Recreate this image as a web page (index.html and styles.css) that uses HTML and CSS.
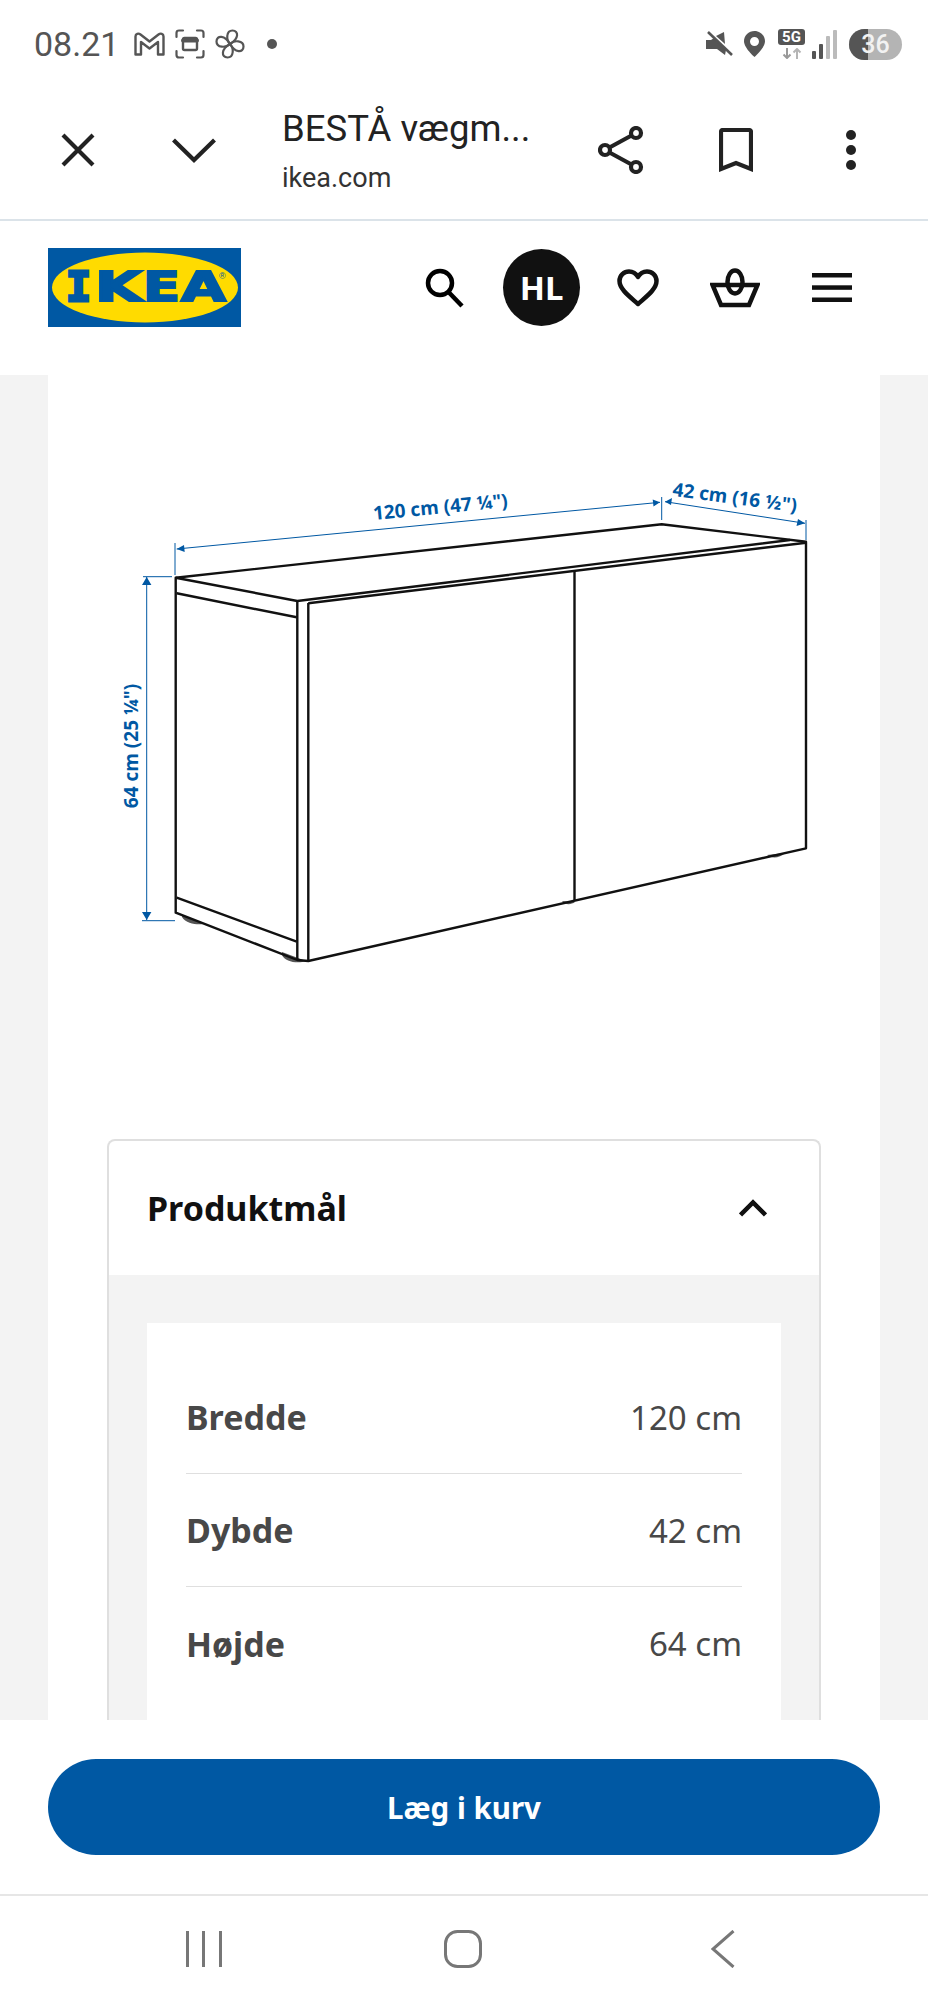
FILE: index.html
```html
<!DOCTYPE html>
<html lang="da">
<head>
    <meta charset="UTF-8">
    <meta name="viewport" content="width=device-width, initial-scale=1.0">
    <title>BESTÅ vægmonteret</title>
    <link rel="stylesheet" href="styles.css">
</head>
<body>
    <div class="status-bar">
        <span class="clock">08.21</span>
        <svg class="st-mail" width="31" height="24" viewBox="0 0 31 24" fill="none" stroke="#555" stroke-width="2.4" stroke-linejoin="round"><path d="M1.500 4.500c0-3 3-3.500 5-2l9 7 9-7c2-1.500 5-1 5 2v18h-5.500V10l-8.500 6.500L7 10v12.500H1.500z"/></svg>
        <svg class="st-shot" width="30" height="30" viewBox="0 0 30 30" fill="none" stroke="#555" stroke-width="2.2" stroke-linecap="round"><path d="M1.500 8V4q0-2.500 2.500-2.500h4M22 1.500h4q2.500 0 2.500 2.500v4M28.500 22v4q0 2.500-2.500 2.500h-4M8 28.500H4q-2.500 0-2.500-2.500v-4"/><rect x="8" y="9" width="14" height="12" rx="1.500" stroke-width="2.400"/><path d="M8 11.500h14" stroke-width="4"/></svg>
        <svg class="st-fan" width="30" height="30" viewBox="0 0 30 30" fill="none" stroke="#555" stroke-width="2.2" stroke-linejoin="round">
            <path d="M15 15C11 11 11 1.500 17.500 1.500 24 1.500 24 10 15 15z"/>
            <path transform="rotate(90 15 15)" d="M15 15C11 11 11 1.500 17.500 1.500 24 1.500 24 10 15 15z"/>
            <path transform="rotate(180 15 15)" d="M15 15C11 11 11 1.500 17.500 1.500 24 1.500 24 10 15 15z"/>
            <path transform="rotate(270 15 15)" d="M15 15C11 11 11 1.500 17.500 1.500 24 1.500 24 10 15 15z"/>
        </svg>
        <span class="st-dot"></span>
        <span class="status-spacer"></span>
        <svg class="st-mute" width="28" height="26" viewBox="0 0 28 26"><path d="M1 9h5l3-2 12 12-1 5-8-6H1zM11 5l8-4 1 12z" fill="#555"/><path d="M3 1l24 23" stroke="#555" stroke-width="2.600"/></svg>
        <svg class="st-pin" width="21" height="26" viewBox="0 0 21 26"><path fill-rule="evenodd" d="M10.500 0C4.700 0 0 4.600 0 10.300 0 17 10.500 26 10.500 26S21 17 21 10.300C21 4.600 16.300 0 10.500 0zm0 6a4.500 4.500 0 1 1 0 9 4.500 4.500 0 0 1 0-9z" fill="#555"/></svg>
        <div class="st-net">
            <span class="st-5g">5G</span>
            <svg width="20" height="11" viewBox="0 0 20 11" fill="none" stroke-width="2"><path d="M5 0v10M1.500 6.500 5 10l3.500-3.500" stroke="#999"/><path d="M15 11V1M11.500 4.500 15 1l3.500 3.500" stroke="#b5b5b5"/></svg>
        </div>
        <svg class="st-signal" width="27" height="30" viewBox="0 0 27 30"><rect x="1" y="22" width="4" height="8" rx="1" fill="#555"/><rect x="8" y="15" width="4" height="15" rx="1" fill="#555"/><rect x="15" y="7" width="4" height="23" rx="1" fill="#bbb"/><rect x="22" y="1" width="4" height="29" rx="1" fill="#bbb"/></svg>
        <div class="st-batt"><span class="st-batt-level"></span><span class="st-batt-num">36</span></div>
    </div>

    <div class="browser-bar">
        <button class="bar-btn">
            <svg width="34" height="34" viewBox="0 0 34 34" fill="none" stroke="#222" stroke-width="4.200"><path d="M2 2l30 30M32 2 2 32"/></svg>
        </button>
        <button class="bar-btn">
            <svg width="44" height="25" viewBox="0 0 44 25" fill="none" stroke="#222" stroke-width="4.200"><path d="M1.500 2 22 22 42.500 2"/></svg>
        </button>
        <div class="page-title">
            <div class="page-name">BESTÅ vægm...</div>
            <div class="page-host">ikea.com</div>
        </div>
        <button class="bar-btn-r">
            <svg width="46" height="48" viewBox="0 0 46 48" fill="none" stroke="#222" stroke-width="4.200"><circle cx="7" cy="24" r="5"/><circle cx="38" cy="7" r="5"/><circle cx="38" cy="41" r="5"/><path d="M11.500 21.500 33.500 9.500M11.500 26.500l22 12"/></svg>
        </button>
        <button class="bar-btn-r">
            <svg width="34" height="44" viewBox="0 0 34 44" fill="none" stroke="#222" stroke-width="4.200"><path d="M2 41V4q0-2 2-2h26q2 0 2 2v37l-15-6z"/></svg>
        </button>
        <button class="bar-btn-r">
            <svg width="10" height="40" viewBox="0 0 10 40" fill="#222"><circle cx="5" cy="5" r="5"/><circle cx="5" cy="20" r="5"/><circle cx="5" cy="35" r="5"/></svg>
        </button>
    </div>

    <header class="site-header">
        <svg class="logo" width="193" height="79" viewBox="0 0 193 79">
            <rect width="193" height="79" fill="#0058a3"/>
            <ellipse cx="97" cy="39.500" rx="93" ry="35" fill="#ffdb00"/>
            <text class="logo-i" x="18" y="53" textLength="25" lengthAdjust="spacingAndGlyphs">I</text>
            <text class="logo-text" x="47" y="53" textLength="47" lengthAdjust="spacingAndGlyphs">K</text>
            <text class="logo-text" x="95" y="53" textLength="37" lengthAdjust="spacingAndGlyphs">E</text>
            <text class="logo-text" x="133" y="53" textLength="45" lengthAdjust="spacingAndGlyphs">A</text>
            <text class="logo-reg" x="171" y="31">®</text>
        </svg>
        <nav class="site-icons">
            <span class="site-icon">
                <svg width="40" height="40" viewBox="0 0 40 40" fill="none" stroke="#000" stroke-width="4.500"><circle cx="16" cy="15" r="12"/><path d="M24.500 24 38 38"/></svg>
            </span>
            <span class="site-icon"><span class="avatar">HL</span></span>
            <span class="site-icon">
                <svg width="42" height="38" viewBox="0 0 42 38" fill="none" stroke="#111" stroke-width="4.500" stroke-linejoin="round"><path d="M21 35C12 27 2.500 20 2.500 12 2.500 6.500 7 2.500 12 2.500c4 0 7 2 9 5.500 2-3.500 5-5.500 9-5.500 5 0 9.500 4 9.500 9.500C39.500 20 30 27 21 35z"/></svg>
            </span>
            <span class="site-icon">
                <svg width="50" height="40" viewBox="0 0 50 40" fill="none" stroke="#111" stroke-width="4.500"><path d="M2.500 17h45L39 37H11z"/><ellipse cx="25" cy="14" rx="7.500" ry="11.500"/></svg>
            </span>
            <span class="site-icon">
                <svg width="40" height="29" viewBox="0 0 40 29" fill="#111"><rect width="40" height="4.500"/><rect y="12.300" width="40" height="4.500"/><rect y="24.500" width="40" height="4.500"/></svg>
            </span>
        </nav>
    </header>

    <main class="page-area">
        <div class="product-col">
            <svg class="drawing" width="832" height="764" viewBox="48 375 832 764">
                <g class="feet">
                    <path d="M182 917c4 7 16 8 21 7l-21-9zM282 955c3 7 16 9 24 6l-24-9zM562 901c3 4 9 4 13 1zM767 855c5 4 13 3 18-2z"/>
                </g>
                <g class="edge">
                    <path d="M175.700 577.700 661.700 524.300 806 541.700V848.300L308.300 961 297.300 960 175.700 912.700z"/>
                    <path d="M175.700 577.700 297.300 601 790 540"/>
                    <path d="M308.300 603.300 806 542.700"/>
                    <path d="M297.300 601V960M308.300 603V961M574.500 571V901"/>
                    <path d="M176.700 593.300 296.700 617.300M176.700 897.700 296.700 941.700"/>
                </g>
                <g class="dim">
                    <path d="M175 543V575M661.700 497V520M806 520V540M143 576.700H172M142 920.700H175"/>
                    <path d="M176.700 549 660 502.300M665 501.700 805 523.300M146.700 577V920"/>
                </g>
                <g class="dim-head">
                    <path d="M176.700 549 184 545 184.700 552zM660 502.300 652.700 499.500 653.500 506.500zM665 501.700 672 498 671 505zM805 523.300 798 519 796.500 526zM146.700 577 142 585H151.400zM146.700 920 142 912H151.400z"/>
                </g>
                <text class="dim-label" transform="translate(441 513.500) rotate(-5.500)">120 cm (47 ¼")</text>
                <text class="dim-label" transform="translate(734 504) rotate(7.500)">42 cm (16 ½")</text>
                <text class="dim-label" transform="translate(138 746) rotate(-90)">64 cm (25 ¼")</text>
            </svg>

            <section class="accordion">
                <div class="acc-head">
                    <h2 class="acc-title">Produktmål</h2>
                    <svg width="28" height="18" viewBox="0 0 28 18" fill="none" stroke="#111" stroke-width="4.500"><path d="M1.500 16 14 3.500 26.500 16"/></svg>
                </div>
                <div class="acc-body">
                    <div class="spec-list">
                        <div class="spec-row"><span class="spec-name">Bredde</span><span class="spec-val">120 cm</span></div>
                        <div class="spec-row"><span class="spec-name">Dybde</span><span class="spec-val">42 cm</span></div>
                        <div class="spec-row"><span class="spec-name">Højde</span><span class="spec-val">64 cm</span></div>
                    </div>
                </div>
            </section>
        </div>
    </main>

    <div class="buy-bar">
        <button class="buy-btn">Læg i kurv</button>
    </div>

    <div class="nav-bar">
        <svg width="36" height="36" viewBox="0 0 36 36" fill="#777"><rect x="0" width="3" height="36"/><rect x="16" width="3" height="36"/><rect x="33" width="3" height="36"/></svg>
        <svg class="nav-home" width="38" height="38" viewBox="0 0 38 38" fill="none" stroke="#777" stroke-width="3"><rect x="1.500" y="1.500" width="35" height="35" rx="12"/></svg>
        <svg width="24" height="38" viewBox="0 0 24 38" fill="none" stroke="#777" stroke-width="3"><path d="M22.500 1 2 19l20.500 18"/></svg>
    </div>
</body>
</html>
```

FILE: styles.css
```css
* {
    box-sizing: border-box;
}

body {
    margin: 0;
    width: 928px;
    height: 2010px;
    overflow: hidden;
    display: flex;
    flex-direction: column;
    background-color: #fff;
    font-family: "Noto Sans", "Open Sans", sans-serif;
}

button {
    background: none;
    border: none;
    padding: 0;
    font-family: inherit;
}

svg {
    display: block;
    flex-shrink: 0;
}

/* phone status bar */
.status-bar {
    height: 81px;
    padding: 7px 26px 0 34px;
    display: flex;
    align-items: center;
    flex-shrink: 0;
}

.clock {
    font-family: Roboto, sans-serif;
    font-size: 34px;
    color: #555;
    width: 100px;
}

.st-shot {
    margin-left: 10px;
}

.st-fan {
    margin-left: 10px;
}

.st-dot {
    width: 10px;
    height: 10px;
    border-radius: 50%;
    background-color: #555;
    margin-left: 22px;
}

.status-spacer {
    flex: 1;
}

.st-pin {
    margin-left: 11px;
}

.st-net {
    margin-left: 13px;
    width: 27px;
    display: flex;
    flex-direction: column;
    align-items: center;
    gap: 3px;
}

.st-5g {
    width: 27px;
    height: 16px;
    border-radius: 3px;
    background-color: #555;
    color: #fff;
    font-family: Roboto, sans-serif;
    font-weight: 700;
    font-size: 15px;
    line-height: 16px;
    text-align: center;
}

.st-signal {
    margin-left: 6px;
}

.st-batt {
    margin-left: 11px;
    width: 53px;
    height: 31px;
    border-radius: 16px;
    background-color: #b4b4b4;
    overflow: hidden;
    position: relative;
    display: flex;
    align-items: center;
    justify-content: center;
}

.st-batt-level {
    position: absolute;
    left: 0;
    top: 0;
    bottom: 0;
    width: 19px;
    background-color: #555;
}

.st-batt-num {
    position: relative;
    color: #f2f2f2;
    font-family: Roboto, sans-serif;
    font-weight: 500;
    font-size: 25px;
}

/* browser custom tab bar */
.browser-bar {
    height: 140px;
    border-bottom: 2px solid #dbe3e9;
    padding-right: 20px;
    display: flex;
    align-items: center;
    flex-shrink: 0;
}

.bar-btn {
    width: 116px;
    height: 100%;
    display: flex;
    align-items: center;
    justify-content: center;
}

.bar-btn:first-child {
    margin-left: 20px;
}

.bar-btn-r {
    width: 115px;
    height: 100%;
    display: flex;
    align-items: center;
    justify-content: center;
}

.page-title {
    flex: 1;
    margin: 2px 0 0 30px;
    font-family: Roboto, sans-serif;
    color: #222;
}

.page-name {
    font-size: 36.500px;
    line-height: 46px;
}

.page-host {
    font-size: 27px;
    line-height: 36px;
    margin-top: 8px;
    color: #333;
}

/* ikea header */
.site-header {
    height: 154px;
    padding: 27px 48px 0;
    display: flex;
    justify-content: space-between;
    align-items: flex-start;
    flex-shrink: 0;
}

.logo-text {
    font-family: "DejaVu Sans", sans-serif;
    font-weight: 700;
    font-size: 40px;
    fill: #0058a3;
    stroke: #0058a3;
    stroke-width: 2px;
}

.logo-i {
    font-family: "DejaVu Sans Mono", monospace;
    font-weight: 700;
    font-size: 40px;
    fill: #0058a3;
    stroke: #0058a3;
    stroke-width: 3px;
}

.logo-reg {
    font-family: "Liberation Sans", sans-serif;
    font-size: 9px;
    fill: #0058a3;
}

.site-icons {
    display: flex;
    height: 79px;
}

.site-icon {
    width: 97px;
    display: flex;
    align-items: center;
    justify-content: center;
}

.avatar {
    width: 77px;
    height: 77px;
    margin-left: 2px;
    border-radius: 50%;
    background-color: #111;
    color: #fff;
    font-weight: 700;
    font-size: 33px;
    display: flex;
    align-items: center;
    justify-content: center;
}

/* product area */
.page-area {
    flex: 1;
    min-height: 0;
    overflow: hidden;
    background-color: #f3f3f3;
    padding: 0 48px;
}

.product-col {
    background-color: #fff;
    height: 100%;
}

.edge path {
    fill: none;
    stroke: #111;
    stroke-width: 2.400;
    stroke-linejoin: round;
}

.feet path {
    fill: #555;
}

.dim path {
    fill: none;
    stroke: #0058a3;
    stroke-width: 1;
}

.dim-head path {
    fill: #0058a3;
}

.dim-label {
    font-family: "Open Sans", sans-serif;
    font-weight: 700;
    font-size: 19px;
    text-anchor: middle;
    fill: #0058a3;
}

.accordion {
    margin: 0 59px;
    border: 2px solid #dfdfdf;
    border-bottom: none;
    border-radius: 8px 8px 0 0;
    overflow: hidden;
}

.acc-head {
    height: 134px;
    padding: 0 52px 0 38px;
    display: flex;
    align-items: center;
    justify-content: space-between;
}

.acc-title {
    margin: 0;
    font-size: 34px;
    font-weight: 700;
    color: #111;
}

.acc-body {
    background-color: #f3f3f3;
    padding: 48px 38px;
}

.spec-list {
    background-color: #fff;
    padding: 38px 39px;
}

.spec-row {
    height: 113px;
    border-bottom: 1px solid #dfdfdf;
    display: flex;
    align-items: center;
    justify-content: space-between;
    font-size: 33px;
    color: #484848;
}

.spec-row:last-child {
    border-bottom: none;
}

.spec-name {
    font-weight: 700;
    font-size: 34px;
}

/* sticky add to cart */
.buy-bar {
    height: 176px;
    padding: 39px 48px 0;
    border-bottom: 2px solid #e6e6e6;
    flex-shrink: 0;
}

.buy-btn {
    width: 100%;
    height: 96px;
    border-radius: 48px;
    background-color: #0058a3;
    color: #fff;
    font-weight: 700;
    font-size: 29.500px;
}

/* android nav */
.nav-bar {
    height: 114px;
    padding: 0 193px 8px 186px;
    display: flex;
    align-items: center;
    justify-content: space-between;
    flex-shrink: 0;
}

.nav-home {
    margin-right: 8px;
}
```
